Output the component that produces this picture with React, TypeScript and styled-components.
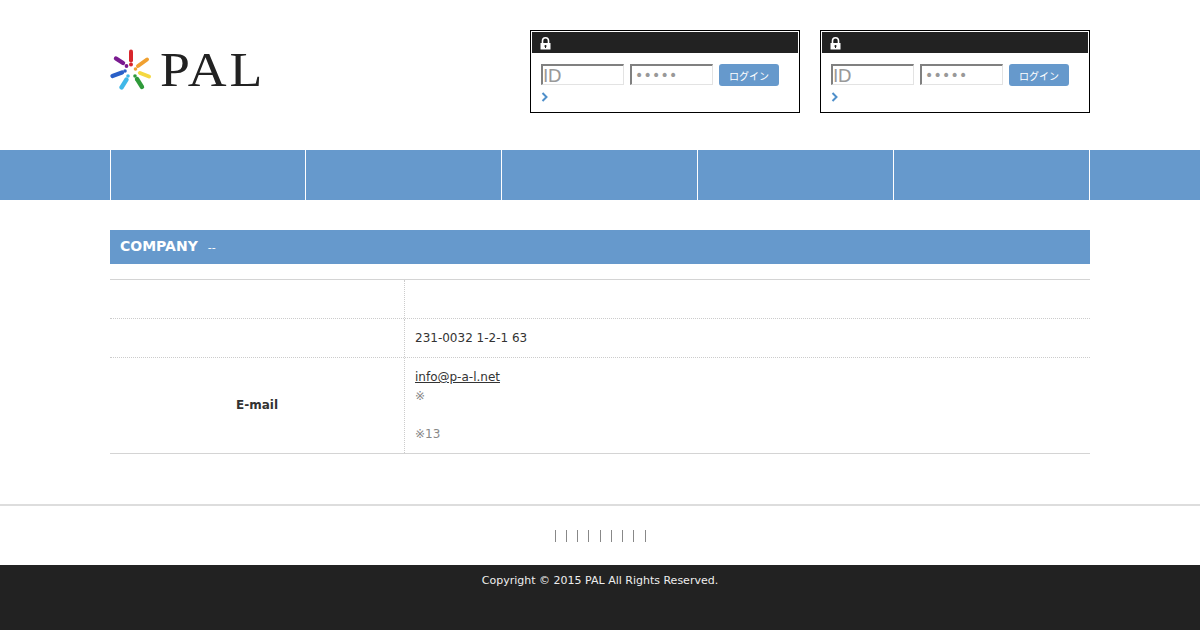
import * as React from 'react';
import styled, { createGlobalStyle } from 'styled-components';

const Blue = '#6699cc';
const Dark = '#222222';

const GlobalStyle = createGlobalStyle`
  html, body {
    margin: 0;
    padding: 0;
    background: #fff;
  }
  body {
    font-family: "DejaVu Sans", "Noto Sans CJK JP", sans-serif;
    font-size: 12px;
    line-height: 19px;
    color: #333;
  }
`;

const Logo = () => (
  <LogoWrap>
    <svg width="42" height="42" viewBox="0 0 42 42" fill="none" strokeLinecap="round">
      <path d="M21 2.500v9" stroke="#d8262c" strokeWidth="4" />
      <circle cx="21" cy="15.500" r="2" fill="#d8262c" />
      <path d="M28 17l9-6.500" stroke="#f0a030" strokeWidth="4" />
      <circle cx="25.500" cy="20" r="1.800" fill="#f0a030" />
      <path d="M30 24l9 3.500" stroke="#f5d840" strokeWidth="4" />
      <path d="M27 30l5 8" stroke="#2f9a3a" strokeWidth="4.400" />
      <circle cx="25" cy="27" r="1.800" fill="#2f9a3a" />
      <path d="M16.500 30.500l-5 8" stroke="#40b8e8" strokeWidth="4.400" />
      <circle cx="18" cy="27" r="1.800" fill="#40b8e8" />
      <path d="M12 23.500l-9.500 3.500" stroke="#2a60c8" strokeWidth="4.200" />
      <circle cx="15" cy="22" r="1.800" fill="#2a60c8" />
      <path d="M13 14l-7-4.500" stroke="#7a1a90" strokeWidth="4.400" />
      <circle cx="16.500" cy="17" r="1.900" fill="#7a1a90" />
    </svg>
    <LogoText>PAL</LogoText>
  </LogoWrap>
);

const LockIcon = () => (
  <svg width="11" height="13" viewBox="0 0 11 13">
    <path d="M2.500 6V3.800a3 3 0 0 1 6 0V6" fill="none" stroke="#fff" strokeWidth="1.600" />
    <path fillRule="evenodd" fill="#fff" d="M.5 6h10v6.500H.5zM5.500 8a1 1 0 0 0-.5 1.900v1h1v-1A1 1 0 0 0 5.500 8z" />
  </svg>
);

const Chevron = () => (
  <svg width="7" height="10" viewBox="0 0 7 10">
    <path d="M1.500 1l4 4-4 4" fill="none" stroke="#4f8fca" strokeWidth="2" />
  </svg>
);

const LoginBox = () => (
  <Login>
    <LoginBar>
      <LockIcon />
    </LoginBar>
    <LoginForm>
      <TextInput placeholder="ID" $large />
      <TextInput placeholder="•••••" />
      <LoginButton>ログイン</LoginButton>
    </LoginForm>
    <LoginLink>
      <Chevron />
    </LoginLink>
  </Login>
);

const App = () => (
  <>
    <GlobalStyle />
    <Header>
      <Inner>
        <Logo />
        <LoginGroup>
          <LoginBox />
          <LoginBox />
        </LoginGroup>
      </Inner>
    </Header>
    <Nav>
      <NavInner>
        {[0, 1, 2, 3, 4].map(i => (
          <NavItem key={i} />
        ))}
      </NavInner>
    </Nav>
    <Main>
      <Title>
        COMPANY<Sub>--</Sub>
      </Title>
      <Table>
        <Row>
          <Label />
          <Value />
        </Row>
        <Row>
          <Label />
          <Value>231-0032 1-2-1 63</Value>
        </Row>
        <Row>
          <Label>E-mail</Label>
          <Value>
            <Mail href="#">info@p-a-l.net</Mail>
            <Note>※</Note>
            <Note>&nbsp;</Note>
            <Note>※13</Note>
          </Value>
        </Row>
      </Table>
    </Main>
    <FooterNav>
      <Bars>
        {Array.from({ length: 9 }).map((_, i) => (
          <Bar key={i} />
        ))}
      </Bars>
    </FooterNav>
    <Footer>Copyright © 2015 PAL All Rights Reserved.</Footer>
  </>
);

export default App;

const Header = styled.header`
  height: 150px;
`;

const Inner = styled.div`
  width: 980px;
  height: 100%;
  margin: 0 auto;
  display: flex;
  justify-content: space-between;
`;

const LogoWrap = styled.div`
  display: flex;
  align-items: center;
  gap: 8px;
  height: 100%;
  padding-bottom: 10px;
  box-sizing: border-box;
`;

const LogoText = styled.span`
  font-family: "Liberation Serif", serif;
  font-size: 48px;
  line-height: 50px;
  letter-spacing: 2.500px;
  color: #222;
  transform: scaleX(1.12);
  transform-origin: left center;
`;

const LoginGroup = styled.div`
  display: flex;
  gap: 20px;
  padding-top: 30px;
`;

const Login = styled.div`
  box-sizing: border-box;
  width: 270px;
  height: 83px;
  border: 1px solid #000;
  padding: 1px;
`;

const LoginBar = styled.div`
  box-sizing: border-box;
  height: 21px;
  background: ${Dark};
  display: flex;
  align-items: center;
  padding: 1px 0 0 8px;
`;

const LoginForm = styled.div`
  display: flex;
  align-items: flex-start;
  gap: 6px;
  padding: 11px 0 0 9px;
`;

const TextInput = styled.input<{ $large?: boolean }>`
  box-sizing: border-box;
  width: 83px;
  height: 21px;
  padding: 0;
  margin: 0;
  border-width: 2px 1px 1px 2px;
  border-style: solid;
  border-color: #808080 #e3e3e3 #e3e3e3 #808080;
  border-radius: 0;
  outline: none;
  background: #fff;
  font-family: "DejaVu Sans", sans-serif;
  font-size: ${p => (p.$large ? '18px' : '14px')};
  letter-spacing: ${p => (p.$large ? '-0.5px' : '0.250px')};
  text-indent: ${p => (p.$large ? '0' : '3px')};

  &::placeholder {
    color: #999;
    opacity: 1;
  }
`;

const LoginButton = styled.button`
  box-sizing: border-box;
  width: 60px;
  height: 22px;
  margin: 0;
  padding: 0;
  border: 0;
  border-radius: 3px;
  background: ${Blue};
  color: #fff;
  font-family: "Noto Sans CJK JP", sans-serif;
  font-size: 10px;
`;

const LoginLink = styled.div`
  display: flex;
  padding: 6px 0 0 9px;
`;

const Nav = styled.nav`
  height: 50px;
  background: ${Blue};
`;

const NavInner = styled.ul`
  list-style: none;
  box-sizing: border-box;
  width: 980px;
  height: 100%;
  margin: 0 auto;
  padding: 0;
  display: grid;
  grid-template-columns: 195px repeat(4, 196px);
  border-right: 1px solid #fff;
`;

const NavItem = styled.li`
  border-left: 1px solid #fff;
`;

const Main = styled.main`
  width: 980px;
  margin: 0 auto;
  padding: 30px 0 50px;
`;

const Title = styled.h2`
  box-sizing: border-box;
  height: 34px;
  margin: 0 0 15px;
  padding: 0 10px;
  background: ${Blue};
  color: #fff;
  font-size: 14px;
  font-weight: bold;
  line-height: 32px;
`;

const Sub = styled.span`
  margin-left: 10px;
  font-size: 11px;
  font-weight: normal;
`;

const Table = styled.div`
  border-top: 1px solid #d4d4d4;
  border-bottom: 1px solid #d4d4d4;
`;

const Row = styled.div`
  display: grid;
  grid-template-columns: 295px 1fr;
  min-height: 38px;

  & + & {
    border-top: 1px dotted #ccc;
  }
`;

const Label = styled.div`
  display: flex;
  align-items: center;
  justify-content: center;
  font-weight: bold;
  border-right: 1px dotted #ccc;
  padding-bottom: 1px;
`;

const Value = styled.div`
  padding: 10px 10px 9px;
`;

const Mail = styled.a`
  display: block;
  width: fit-content;
  color: #333;
`;

const Note = styled.div`
  color: #888;
`;

const FooterNav = styled.div`
  box-sizing: border-box;
  height: 61px;
  border-top: 2px solid #ddd;
  display: flex;
  justify-content: center;
  padding-top: 24px;
`;

const Bars = styled.div`
  display: flex;
  width: 91px;
  height: 12px;
  margin-left: 0.1px;
`;

const Bar = styled.span`
  box-sizing: border-box;
  flex: 0 0 11.250px;
  border-left: 1px solid #888;

  &:last-child {
    flex-basis: 1px;
  }
`;

const Footer = styled.footer`
  height: 65px;
  background: ${Dark};
  color: #eee;
  font-size: 11px;
  text-align: center;
  padding-top: 6px;
  box-sizing: border-box;
`;
